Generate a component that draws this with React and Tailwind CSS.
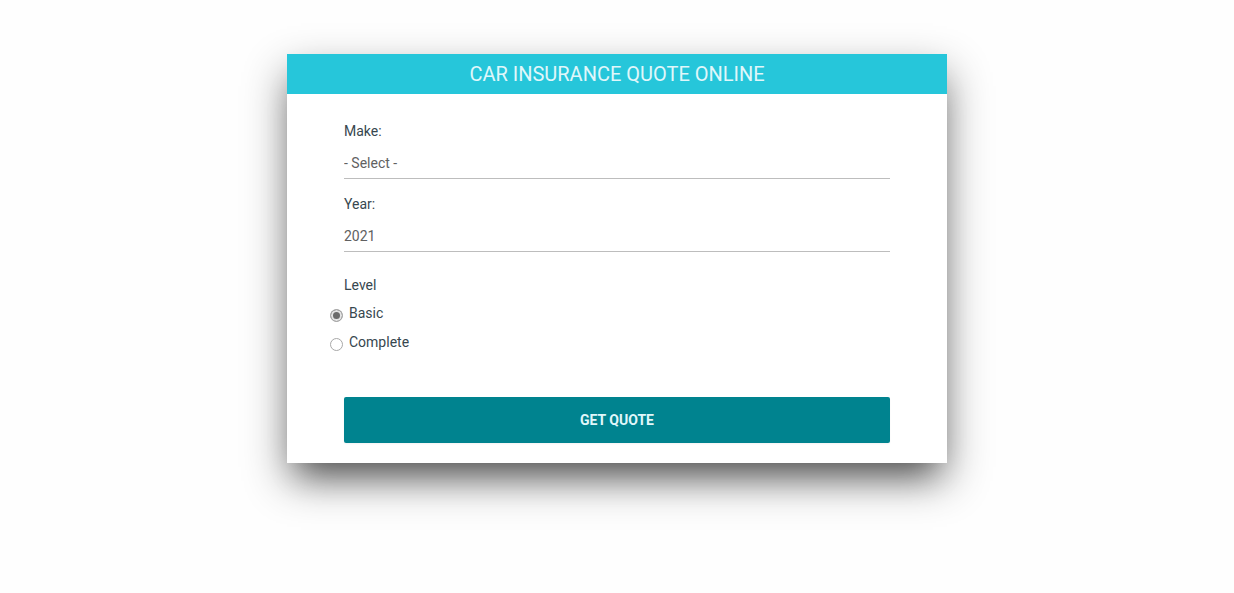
const fieldClass =
  "block w-full appearance-none rounded-none border-0 border-b border-[#bdbdbd] bg-transparent pt-2 pb-[3px] text-sm leading-6 text-[#616161] outline-none";

function Level({ id, label, defaultChecked }) {
  return (
    <div className="flex h-[29px] items-center gap-[6px]">
      <input
        type="radio"
        name="level"
        id={id}
        value={id}
        defaultChecked={defaultChecked}
        className="mt-[6px] size-[13px] shrink-0 appearance-none rounded-full border border-[#a8a8a8] bg-white checked:bg-[#6b6b6b] checked:shadow-[inset_0_0_0_2px_#e4e4e4]"
      />
      <label htmlFor={id}>{label}</label>
    </div>
  );
}

export default function App() {
  return (
    <div className="min-h-screen bg-[#fefefe] px-4 py-[54px] font-['Roboto',sans-serif] text-sm text-[#37474f]">
      <main className="mx-auto max-w-[660px] bg-white shadow-[0_22px_30px_-16px_rgba(0,0,0,0.45),0_18px_40px_rgba(0,0,0,0.45)]">
        <h1 className="bg-[#26c6da] text-center text-xl leading-10 text-[#e0f7fa]">
          CAR INSURANCE QUOTE ONLINE
        </h1>
        <form className="px-[57px] pt-[25px] pb-5" onSubmit={(e) => e.preventDefault()}>
          <label htmlFor="make" className="block leading-6">Make:</label>
          <select id="make" className={fieldClass} defaultValue="">
            <option value="">- Select -</option>
            <option value="american">American</option>
            <option value="european">European</option>
            <option value="asian">Asian</option>
          </select>
          <label htmlFor="year" className="mt-[13px] block leading-6">Year:</label>
          <select id="year" className={fieldClass} defaultValue="2021">
            <option value="2021">2021</option>
            <option value="2020">2020</option>
            <option value="2019">2019</option>
          </select>
          <fieldset className="mt-5 -ml-[14px]">
            <legend className="pl-[14px] leading-[26px]">Level</legend>
            <Level id="basic" label="Basic" defaultChecked />
            <Level id="complete" label="Complete" />
          </fieldset>
          <button
            type="submit"
            className="mt-[41px] block h-[46px] w-full rounded-xs bg-[#00838f] text-sm font-bold text-[#e0f7fa] shadow-xs"
          >
            GET QUOTE
          </button>
        </form>
      </main>
    </div>
  );
}
